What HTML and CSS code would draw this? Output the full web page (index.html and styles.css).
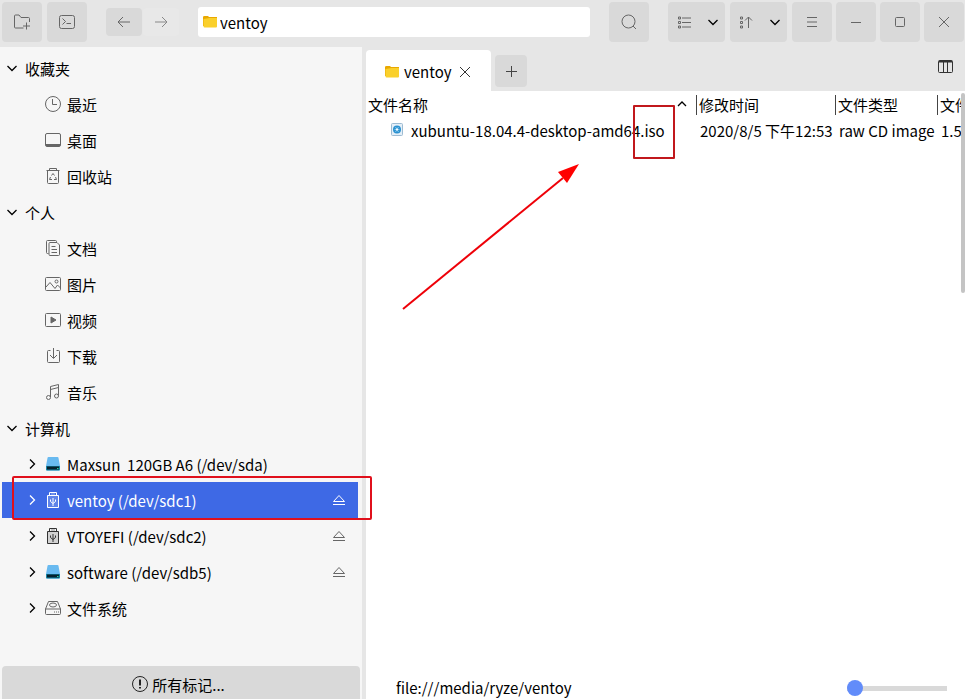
FILE: index.html
```
<!DOCTYPE html>
<html lang="zh-CN">
<head>
	<meta charset="utf-8">
	<title>ventoy</title>
	<link rel="stylesheet" href="styles.css">
</head>
<body>
	<svg class="symbols" aria-hidden="true">
		<symbol id="folder" viewBox="0 0 16 16">
			<path d="M1 3Q1 2 2.500 2H6l1 1h8v9H1z" fill="#e9a800"/>
			<path d="M1.500 5l6-1H15v8.500q0 1-1 1H2.500q-1 0-1-1z" fill="#fad02c"/>
		</symbol>
		<symbol id="down" viewBox="0 0 16 16"><path d="M3.500 6L8 10.500 12.500 6"/></symbol>
		<symbol id="right" viewBox="0 0 16 16"><path d="M6 3.500L10.500 8 6 12.500"/></symbol>
		<symbol id="close" viewBox="0 0 16 16"><path d="M3 3l10 10M13 3L3 13"/></symbol>
		<symbol id="eject" viewBox="0 0 16 16"><path d="M8 3.500L2.500 9.500h11zM2 12.500h12"/></symbol>
		<symbol id="usb" viewBox="-1 -1 18 18">
			<path d="M4.500.5h7v3h-7zM7 1.500v1M9 1.500v1"/>
			<path d="M2.500 3.500h11v12h-11z" fill="currentColor" fill-opacity=".18"/>
			<path d="M8 6v8M5.500 7.500v2L8 11.500l2.500-2v-2"/>
		</symbol>
		<symbol id="disk" viewBox="-1 -1 18 18">
			<path d="M2.500 2q0-1 1-1h9q1 0 1 1L15 10v3.500q0 1-1 1H2q-1 0-1-1V10z" fill="#69baf0" stroke="none"/>
			<path d="M1 10h14v3.500q0 1-1 1H2q-1 0-1-1z" fill="#1685a5" stroke="none"/>
			<path d="M2 10.500h12v3H2z" fill="#06202c" stroke="none"/>
			<path d="M12 12h1.500v1H12z" fill="#27d3a0" stroke="none"/>
		</symbol>
	</svg>

	<header class="toolbar">
		<div class="group">
			<button class="btn" aria-label="新建文件夹"><svg class="icon" viewBox="0 0 18 18"><path d="M10.500 15H2.500q-1 0-1-1V3q0-1 1-1H6l2 2.500h7.500q1 0 1 1V9M13.500 9.500v7M10 13h7"/></svg></button>
			<button class="btn" aria-label="终端"><svg class="icon" viewBox="0 0 18 18"><rect x="1.500" y="2.500" width="15" height="13" rx="2"/><path d="M4.500 5.500L7.500 8.500 4.500 11.500M8.500 10.500h4.500"/></svg></button>
		</div>
		<div class="group history">
			<button class="btn small" aria-label="后退"><svg class="icon" viewBox="0 0 18 18"><path d="M15 9H3M8 4L3 9l5 5"/></svg></button>
			<button class="btn small flat" aria-label="前进"><svg class="icon" viewBox="0 0 18 18"><path d="M3 9h12M10 4l5 5-5 5"/></svg></button>
		</div>
		<label class="address">
			<svg class="folder"><use href="#folder"/></svg>
			<input type="text" value="ventoy" aria-label="地址">
		</label>
		<button class="btn" aria-label="搜索"><svg class="icon" viewBox="0 0 18 18"><circle cx="8.500" cy="8.500" r="6.500"/><path d="M13 13l3 3"/></svg></button>
		<div class="group views">
			<button class="btn wide" aria-label="视图类型">
				<svg class="icon" viewBox="0 0 18 18"><path d="M7 5h9M7 9.500h9M7 14h9M3.500 4h2v2h-2zM3.500 8.500h2v2h-2zM3.500 13h2v2h-2z"/></svg>
				<svg class="chevron"><use href="#down"/></svg>
			</button>
			<button class="btn wide" aria-label="排序类型">
				<svg class="icon" viewBox="0 0 18 18"><path d="M11.500 15V4M8 7.500L11.500 4 15 7.500M3.500 4h2v2h-2zM3.500 8.500h2v2h-2zM3.500 13h2v2h-2z"/></svg>
				<svg class="chevron"><use href="#down"/></svg>
			</button>
		</div>
		<div class="group window">
			<button class="btn" aria-label="选项"><svg class="icon" viewBox="0 0 18 18"><path d="M4 4.500h10M4 9h10M4 13.500h10"/></svg></button>
			<button class="btn" aria-label="最小化"><svg class="icon" viewBox="0 0 18 18"><path d="M4 9.500h10"/></svg></button>
			<button class="btn" aria-label="最大化"><svg class="icon" viewBox="0 0 18 18"><rect x="4.500" y="4.500" width="9" height="9" rx="1"/></svg></button>
			<button class="btn" aria-label="关闭"><svg class="icon" viewBox="0 0 18 18"><path d="M4 4l10 10M14 4L4 14"/></svg></button>
		</div>
	</header>

	<div class="content">
		<nav class="sidebar">
			<ul class="tree">
				<li><button class="row title"><svg class="chevron"><use href="#down"/></svg>收藏夹</button></li>
				<li><a href="#" class="row"><svg class="icon" viewBox="0 0 18 18"><circle cx="9" cy="9" r="7.500"/><path d="M8.500 4v5.500H13"/></svg>最近</a></li>
				<li><a href="#" class="row"><svg class="icon" viewBox="0 0 18 18"><rect x="1.500" y="2.500" width="15" height="13" rx="1.500"/><path d="M2 14h14" stroke-width="2"/></svg>桌面</a></li>
				<li><a href="#" class="row"><svg class="icon" viewBox="0 0 18 18"><path d="M2.500 3.500h13M5.500 3V1.500h7V3M3.500 4v11.500q0 1 1 1h9q1 0 1-1V4M7.500 8.500L9 6.500l1.500 2M6.500 10L5.500 12.500H8M11.500 10l1 2.500H10"/></svg>回收站</a></li>
				<li><button class="row title"><svg class="chevron"><use href="#down"/></svg>个人</button></li>
				<li><a href="#" class="row"><svg class="icon" viewBox="0 0 18 18"><path d="M4.500 14.500H3.500q-1 0-1-1v-11q0-1 1-1h8q1 0 1 1V3M6 3.500h7l2.500 2.500v9.500q0 1-1 1H6q-1 0-1-1v-11q0-1 1-1zM7.500 7.500h4M7.500 10.500h5.500M7.500 13.500h5.500"/></svg>文档</a></li>
				<li><a href="#" class="row"><svg class="icon" viewBox="0 0 18 18"><rect x="1.500" y="2.500" width="15" height="13" rx="1"/><path d="M2 12l4-4.500 5 6 2.500-3.500 3 3"/><circle cx="12.500" cy="6.500" r="1.500"/></svg>图片</a></li>
				<li><a href="#" class="row"><svg class="icon" viewBox="0 0 18 18"><rect x="1.500" y="2.500" width="15" height="13" rx="1"/><path d="M7 6l5 3-5 3z" fill="currentColor"/></svg>视频</a></li>
				<li><a href="#" class="row"><svg class="icon" viewBox="0 0 18 18"><path d="M6.500 3.500H4.500q-1 0-1 1v10q0 1 1 1h10q1 0 1-1v-10q0-1-1-1h-2M9.500 1v10M6 8l3.500 3.500L13 8"/></svg>下载</a></li>
				<li><a href="#" class="row"><svg class="icon" viewBox="0 0 18 18"><path d="M6.500 14V3.500l8-2V12.500M6.500 6.500l8-2"/><circle cx="4.500" cy="14.500" r="2"/><circle cx="12.500" cy="13" r="2"/></svg>音乐</a></li>
				<li><button class="row title"><svg class="chevron"><use href="#down"/></svg>计算机</button></li>
				<li><a href="#" class="row device"><svg class="chevron"><use href="#right"/></svg><svg class="icon"><use href="#disk"/></svg><span class="label">Maxsun&nbsp; 120GB A6 (/dev/sda)</span></a></li>
				<li class="marked">
					<a href="#" class="row device selected"><svg class="chevron"><use href="#right"/></svg><svg class="icon"><use href="#usb"/></svg><span class="label">ventoy (/dev/sdc1)</span><svg class="eject"><use href="#eject"/></svg></a>
					<span class="mark"></span>
				</li>
				<li><a href="#" class="row device"><svg class="chevron"><use href="#right"/></svg><svg class="icon dark"><use href="#usb"/></svg><span class="label">VTOYEFI (/dev/sdc2)</span><svg class="eject"><use href="#eject"/></svg></a></li>
				<li><a href="#" class="row device"><svg class="chevron"><use href="#right"/></svg><svg class="icon"><use href="#disk"/></svg><span class="label">software (/dev/sdb5)</span><svg class="eject"><use href="#eject"/></svg></a></li>
				<li><a href="#" class="row device"><svg class="chevron"><use href="#right"/></svg><svg class="icon" viewBox="0 0 18 18"><path d="M4.500 2.500h9l3 7.500H1.500zM1.500 10v4.500q0 1 1 1h13q1 0 1-1V10M10 13h1M12 13h1M14 13h1"/><ellipse cx="9" cy="6" rx="3.500" ry="2"/></svg><span class="label">文件系统</span></a></li>
			</ul>
			<button class="tags"><svg class="icon" viewBox="0 0 18 18"><circle cx="9" cy="9" r="7.500"/><path d="M9 4.500v6M9 12v1.500" stroke-width="2"/></svg>所有标记...</button>
		</nav>

		<main class="view">
			<div class="tabs">
				<div class="tab">
					<svg class="folder"><use href="#folder"/></svg>
					<span>ventoy</span>
					<button class="plain" aria-label="关闭标签"><svg class="cross"><use href="#close"/></svg></button>
				</div>
				<button class="add" aria-label="新建标签"><svg class="cross" viewBox="0 0 16 16"><path d="M8.500 3v11M3 8.500h11"/></svg></button>
				<button class="plain preview" aria-label="预览"><svg class="cross" viewBox="0 0 16 16"><rect x=".5" y="1.500" width="14" height="12" rx="1"/><path d="M1 2.500h13" stroke-width="2"/><path d="M5.500 3v10M9.500 3v10"/></svg></button>
			</div>

			<div class="files">
				<table>
					<colgroup><col><col class="date"><col class="type"><col class="size"></colgroup>
					<thead>
						<tr>
							<th><div class="sort">文件名称<svg class="chevron" viewBox="0 0 16 16"><path d="M4 9L8 5l4 4"/></svg></div></th>
							<th><div>修改时间</div></th>
							<th><div>文件类型</div></th>
							<th><div>文件</div></th>
						</tr>
					</thead>
					<tbody>
						<tr>
							<td><div class="name">
								<svg class="file" viewBox="0 0 14 16"><rect x="1.500" y="1.500" width="11" height="12" rx="1" fill="#e4eff8" stroke="#9dbbd2"/><circle cx="7" cy="7.500" r="4" fill="#2a91d0"/><path d="M5.500 5l3 5M8.500 5l-3 5M4.500 7.500h5" stroke="#a9dbf5" stroke-width=".7"/><circle cx="7" cy="7.500" r="1" fill="#fff"/></svg>
								<span>xubuntu-18.04.4-desktop-amd64<span class="ext">.iso</span></span>
							</div></td>
							<td>2020/8/5 下午12:53</td>
							<td>raw CD image</td>
							<td>1.5</td>
						</tr>
					</tbody>
				</table>
				<svg class="arrow" viewBox="0 0 180 150"><path d="M2 147L162 16" stroke="#ee0008" stroke-width="2"/><path d="M178 2L157 10l9 11z" fill="#f00" stroke="none"/></svg>
				<div class="scrollbar"></div>
			</div>

			<footer class="status">
				<span>file:///media/ryze/ventoy</span>
				<input type="range" min="0" max="100" value="0" aria-label="缩放">
			</footer>
		</main>
	</div>
</body>
</html>
```
FILE: styles.css
```
*{
	box-sizing: border-box;
}
body{
	background-color: #e6e6e6;
	color: #000;
	display: flex;
	flex-direction: column;
	font: 15px/22px "Noto Sans CJK SC", sans-serif;
	height: 100vh;
	margin: 0;
	overflow: hidden;
}
button,
input{
	background: none;
	border: none;
	color: inherit;
	font: inherit;
	margin: 0;
	outline: none;
	padding: 0;
}
svg{
	display: block;
	fill: none;
	flex: none;
	stroke: currentColor;
}
.symbols{
	height: 0;
	position: absolute;
	width: 0;
}
.icon{
	color: #666;
	height: 18px;
	width: 18px;
}
.chevron,
.cross,
.eject{
	height: 16px;
	width: 16px;
}
.chevron{
	stroke-width: 1.3;
}
.folder{
	height: 16px;
	stroke: none;
	width: 16px;
}

/* toolbar */
.toolbar{
	align-items: center;
	display: flex;
	flex: none;
	height: 47px;
	padding: 0 1px 3px 2px;
}
.group{
	align-items: center;
	display: flex;
	gap: 5px;
}
.btn{
	align-items: center;
	background-color: #d9d9d9;
	border-radius: 4px;
	display: flex;
	height: 40px;
	justify-content: center;
	width: 40px;
}
.btn.small{
	height: 28px;
	width: 36px;
}
.btn.flat{
	background-color: #e8e8e8;
}
.btn.flat .icon{
	color: #888;
}
.btn.wide{
	gap: 12px;
	padding-left: 2px;
	width: 57px;
}
.history{
	gap: 1px;
	margin: 0 19px;
}
.window{
	gap: 4px;
	margin-left: 5px;
}
.address{
	align-items: center;
	background-color: #fff;
	border-radius: 3px;
	display: flex;
	flex: 1;
	gap: 2px;
	height: 30px;
	margin-right: 19px;
	min-width: 0;
	padding-left: 4px;
}
.address input{
	flex: 1;
	min-width: 0;
	padding-top: 2px;
}
.views{
	margin-left: 19px;
}

/* sidebar */
.content{
	display: flex;
	flex: 1;
	min-height: 0;
}
.sidebar{
	background-color: #f6f6f6;
	display: flex;
	flex: none;
	flex-direction: column;
	justify-content: space-between;
	margin-right: 4px;
	width: 362px;
}
.tree{
	list-style: none;
	margin: 0;
	padding: 3px 4px 0 2px;
}
.row{
	align-items: center;
	color: #000;
	display: flex;
	gap: 5px;
	height: 36px;
	padding: 2px 0 0 42px;
	text-align: left;
	text-decoration: none;
	width: 100%;
}
.row svg{
	margin-bottom: 2px;
}
.row.title{
	padding-left: 2px;
}
.row.device{
	padding: 2px 11px 0 22px;
}
.device .chevron{
	margin-right: -1px;
}
.device .label{
	flex: 1;
}
.icon.dark{
	color: #333;
}
.eject{
	color: #666;
}
.selected,
.row.selected,
.selected .icon,
.selected .eject{
	color: #fff;
}
.selected{
	background-color: #3e69e5;
}
.marked{
	position: relative;
}
.mark{
	border: 2px solid #e0101c;
	border-radius: 2px;
	inset: -6px -14px -2px 10px;
	pointer-events: none;
	position: absolute;
	z-index: 1;
}
.tags{
	align-items: center;
	background-color: #d9d9d9;
	border-radius: 4px 4px 0 0;
	display: flex;
	gap: 3px;
	height: 33px;
	justify-content: center;
	margin: 0 2px;
	padding: 4px 6px 0 0;
}
.tags .icon{
	color: #222;
	margin-bottom: 2px;
}

/* file view */
.view{
	background-color: #fff;
	display: flex;
	flex: 1;
	flex-direction: column;
	min-width: 0;
}
.tabs{
	align-items: center;
	background-color: #e6e6e6;
	display: flex;
	flex: none;
	height: 44px;
	padding: 3px 11px 0 0;
}
.tab{
	align-items: center;
	background-color: #fff;
	border-radius: 4px 4px 0 0;
	display: flex;
	gap: 4px;
	height: 41px;
	padding: 3px 18px 0;
}
.tab .plain{
	margin-left: 1px;
}
.add{
	align-items: center;
	background-color: #d9d9d9;
	border-radius: 4px;
	color: #444;
	display: flex;
	height: 32px;
	justify-content: center;
	margin-left: 4px;
	width: 32px;
}
.plain{
	color: #333;
}
.preview{
	margin: 0 0 8px auto;
}
.files{
	flex: 1;
	min-height: 0;
	overflow: hidden;
	position: relative;
}
table{
	border-collapse: collapse;
	table-layout: fixed;
	width: 100%;
}
.date{
	width: 139px;
}
.type{
	width: 102px;
}
.size{
	width: 28px;
}
th,
td{
	font-weight: normal;
	padding: 0;
	text-align: left;
	vertical-align: top;
	white-space: nowrap;
}
th{
	height: 29px;
	padding-top: 4px;
}
th div{
	height: 20px;
	line-height: 20px;
	padding-left: 2px;
}
th + th div{
	border-left: 1px solid #444;
}
td{
	height: 26px;
	padding-left: 4px;
}
.sort{
	align-items: center;
	display: flex;
	justify-content: space-between;
	padding-right: 6px;
}
.name{
	align-items: center;
	display: flex;
	gap: 7px;
	padding-left: 20px;
}
.file{
	height: 16px;
	margin-bottom: 2px;
	stroke: none;
	width: 14px;
}
.ext{
	position: relative;
}
.ext::after{
	border: 2px solid #c1181c;
	border-radius: 1px;
	content: "";
	inset: -15px -10px -18px -7px;
	position: absolute;
}
.arrow{
	height: 150px;
	left: 35px;
	position: absolute;
	top: 71px;
	width: 180px;
}
.scrollbar{
	background-color: #c4c4c4;
	border-radius: 2px;
	height: 200px;
	position: absolute;
	right: 0;
	top: 2px;
	width: 4px;
}

/* status bar */
.status{
	align-items: center;
	display: flex;
	flex: none;
	height: 22px;
	justify-content: space-between;
	padding: 0 18px 0 30px;
}
.status input{
	-webkit-appearance: none;
	background: linear-gradient(#d9d9d9, #d9d9d9) no-repeat center / 100% 5px;
	height: 16px;
	width: 100px;
}
.status input::-webkit-slider-thumb{
	-webkit-appearance: none;
	background-color: #628cfa;
	border-radius: 50%;
	height: 16px;
	width: 16px;
}
```
